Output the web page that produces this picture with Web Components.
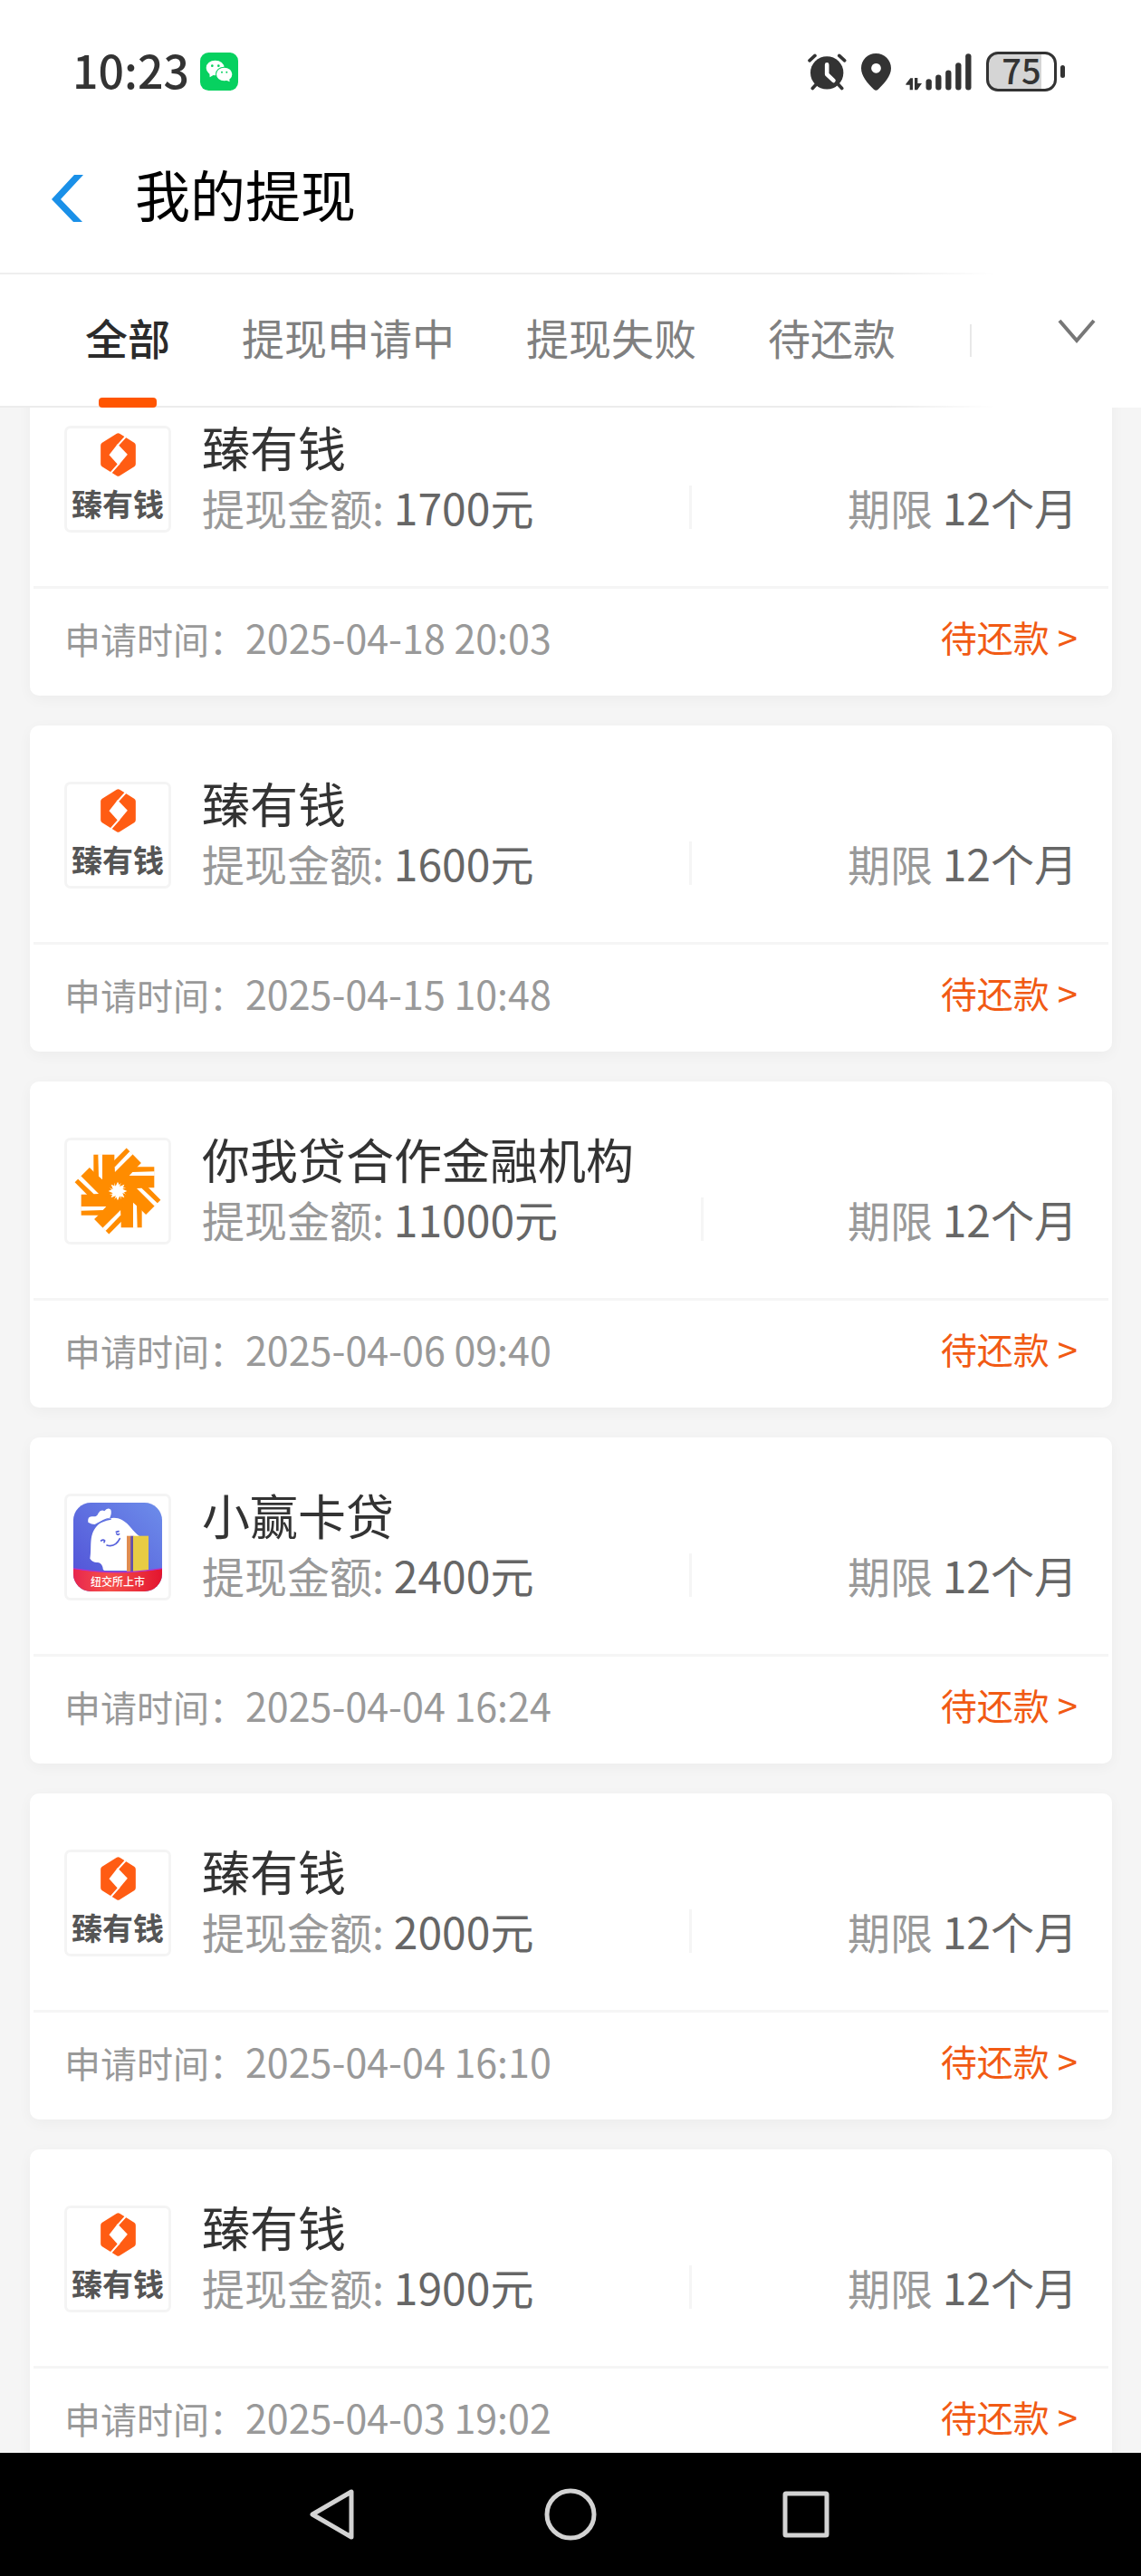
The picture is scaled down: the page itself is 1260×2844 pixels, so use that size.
<!DOCTYPE html>
<html lang="zh-CN">
<head>
<meta charset="UTF-8">
<meta name="viewport" content="width=device-width, initial-scale=1">
<title>我的提现</title>
<style>
  html, body {
    margin: 0;
    height: 100%;
  }

  body {
    display: flex;
    flex-direction: column;
    overflow: hidden;
    background: #fff;
    color: #333;
    font-family: "Noto Sans CJK SC", sans-serif;
  }
</style>
</head>
<body>
  <status-bar time="10:23" battery="75"></status-bar>
  <title-bar>我的提现</title-bar>
  <filter-tabs tabs="全部,提现申请中,提现失败,待还款"></filter-tabs>
  <record-list>
    <record-card name="臻有钱" logo="zhen" amount="1700元" term="12个月" time="2025-04-18 20:03">待还款 &gt;</record-card>
    <record-card name="臻有钱" logo="zhen" amount="1600元" term="12个月" time="2025-04-15 10:48">待还款 &gt;</record-card>
    <record-card name="你我贷合作金融机构" logo="niwo" amount="11000元" term="12个月" time="2025-04-06 09:40">待还款 &gt;</record-card>
    <record-card name="小赢卡贷" logo="xiaoying" amount="2400元" term="12个月" time="2025-04-04 16:24">待还款 &gt;</record-card>
    <record-card name="臻有钱" logo="zhen" amount="2000元" term="12个月" time="2025-04-04 16:10">待还款 &gt;</record-card>
    <record-card name="臻有钱" logo="zhen" amount="1900元" term="12个月" time="2025-04-03 19:02">待还款 &gt;</record-card>
  </record-list>
  <system-nav></system-nav>

<script>
/**
 * Phone status bar: clock, app badge, signal and battery
 */
class StatusBar extends HTMLElement {
  constructor() {
    super();
    this.attachShadow({ mode: 'open' });
  }

  connectedCallback() {
    this.shadowRoot.innerHTML = `
      <style>
        :host {
          flex: none;
          display: flex;
          align-items: center;
          justify-content: space-between;
          box-sizing: border-box;
          height: 136px;
          padding: 22px 84px 0 80px;
          color: #333;
        }

        .group {
          display: flex;
          align-items: center;
        }

        .left { gap: 12px; }
        .right { gap: 16px; }

        .time {
          font-size: 50px;
          font-weight: 500;
          line-height: 58px;
          padding-bottom: 6px;
        }

        svg { display: block; }

        .battery {
          display: flex;
          align-items: center;
          gap: 4px;
        }

        .cell {
          display: flex;
          align-items: center;
          justify-content: center;
          box-sizing: border-box;
          width: 78px;
          height: 44px;
          padding-bottom: 4px;
          border: 3px solid #333;
          border-radius: 13px;
          background: linear-gradient(90deg, #d5d5d5 80%, #fff 80%);
          font-size: 38px;
          font-weight: 500;
          line-height: 36px;
        }

        .nub {
          width: 5px;
          height: 14px;
          border-radius: 3px;
          background: #333;
        }
      </style>
      <div class="group left">
        <span class="time">${this.getAttribute('time')}</span>
        <svg width="42" height="42" viewBox="663 84 126 126" aria-hidden="true">
          <rect x="663" y="84" width="126" height="126" rx="28" fill="#07d160"/>
          <ellipse cx="713" cy="135" rx="30" ry="25" fill="#fff"/>
          <path d="M694 150 L695 166 L712 156Z" fill="#fff"/>
          <ellipse cx="743" cy="156" rx="29" ry="25" fill="#07d160"/>
          <ellipse cx="743" cy="156" rx="26" ry="22" fill="#fff"/>
          <path d="M745 174 L761 181 L759 168Z" fill="#fff"/>
          <g fill="#07d160">
            <circle cx="703" cy="128" r="4"/><circle cx="724" cy="128" r="4"/>
            <circle cx="735" cy="149" r="3"/><circle cx="751" cy="149" r="3"/>
          </g>
        </svg>
      </div>
      <div class="group right">
        <svg width="43" height="41" viewBox="156 83 130 123" fill="none" stroke-linecap="round" stroke-linejoin="round" aria-hidden="true">
          <circle cx="220" cy="147" r="55" fill="#333"/>
          <g stroke="#333" stroke-width="11">
            <path d="M162 106 L180 90"/><path d="M261 90 L279 106"/>
            <path d="M186 184 L172 199"/><path d="M256 184 L270 199"/>
          </g>
          <path d="M220 120 V152 L242 173" stroke="#fff" stroke-width="14"/>
        </svg>
        <svg width="33" height="41" viewBox="333 83 99 123" aria-hidden="true">
          <path fill="#333" fill-rule="evenodd" d="M382 83 C410 83 432 105 432 132 C432 158 411 181 389 202 Q382 208 375 202 C353 181 333 158 333 132 C333 105 354 83 382 83Z M382 116 a16 16 0 1 0 1 0Z"/>
        </svg>
        <svg width="73" height="41" viewBox="480 83 219 123" stroke="#333" stroke-width="19" stroke-linecap="round" aria-hidden="true">
          <path d="M557 177 V195"/><path d="M589 163 V195"/><path d="M622 148 V195"/><path d="M655 123 V195"/><path d="M688 93 V195"/>
          <path stroke="none" fill="#333" d="M481 184 L496 165 H504 V204 H494 V187 H481Z M510 164 H520 V182 H534 L519 204 H510Z"/>
        </svg>
        <div class="battery">
          <span class="cell">${this.getAttribute('battery')}</span>
          <span class="nub"></span>
        </div>
      </div>
    `;
  }
}

/**
 * Page title with the back button
 */
class TitleBar extends HTMLElement {
  constructor() {
    super();
    this.attachShadow({ mode: 'open' });
    this.shadowRoot.innerHTML = `
      <style>
        :host {
          flex: none;
          display: flex;
          align-items: center;
          gap: 56px;
          height: 165px;
          padding: 0 57px;
        }

        button {
          padding: 0;
          border: none;
          background: none;
        }

        svg { display: block; }

        h1 {
          margin: 0;
          padding-bottom: 10px;
          color: #000;
          font-size: 61px;
          font-weight: 400;
          line-height: 72px;
        }
      </style>
      <button type="button" aria-label="返回">
        <svg width="36" height="52" viewBox="0 0 36 52"><path d="M25 0 H35 L10 27 L34 52 H24 L0 27Z" fill="#1a90e8"/></svg>
      </button>
      <h1><slot></slot></h1>
    `;
  }
}

class FilterTabs extends HTMLElement {
  constructor() {
    super();
    this.attachShadow({ mode: 'open' });
  }

  connectedCallback() {
    const tabs = this.getAttribute('tabs').split(',');

    this.shadowRoot.innerHTML = `
      <style>
        :host {
          flex: none;
          position: relative;
          z-index: 1;
          display: flex;
          align-items: center;
          justify-content: space-between;
          height: 145px;
          padding: 0 50px 0 94px;
          border-top: 2px solid #eee;
          border-bottom: 2px solid #ececec;
          background: #fff;
        }

        .tabs {
          display: flex;
          align-items: stretch;
          gap: 79px;
          height: 100%;
        }

        button {
          position: relative;
          padding: 0;
          border: none;
          background: none;
          color: #808080;
          font: inherit;
        }

        .tab {
          padding-bottom: 8px;
          font-size: 47px;
          white-space: nowrap;
        }

        .tab[aria-selected="true"] {
          color: #2b2b2b;
          font-weight: 500;
        }

        .tab[aria-selected="true"]::after {
          content: "";
          position: absolute;
          left: calc(50% - 32px);
          bottom: -2px;
          width: 64px;
          height: 11px;
          border-radius: 4px;
          background: #f50;
        }

        /* edge of the next filter, hidden behind the fade */
        .next {
          align-self: center;
          width: 2px;
          height: 36px;
          margin-left: 3px;
          background: #999;
        }

        .fade {
          position: absolute;
          top: -2px;
          right: 0;
          bottom: -2px;
          width: 280px;
          background: linear-gradient(90deg, rgba(255, 255, 255, 0), #fff 42%);
        }

        svg { display: block; }

        .more { padding-bottom: 20px; }
      </style>
      <div class="tabs" role="tablist">
        ${tabs.map((tab, i) => `<button type="button" class="tab" role="tab" aria-selected="${i === 0}">${tab}</button>`).join('')}
        <span class="next"></span>
      </div>
      <div class="fade"></div>
      <button type="button" class="more" aria-label="展开">
        <svg width="42" height="28" viewBox="0 0 42 28" fill="none" stroke="#777" stroke-width="4"><path d="M2 2 L21 24 L40 2"/></svg>
      </button>
    `;

    this.shadowRoot.querySelectorAll('.tab').forEach(tab => {
      tab.addEventListener('click', () => this.select(tab));
    });
  }

  select(active) {
    this.shadowRoot.querySelectorAll('.tab').forEach(tab => {
      tab.setAttribute('aria-selected', tab === active);
    });
  }
}

/**
 * Lender logo in a framed square: zhen, niwo or xiaoying
 */
class LenderLogo extends HTMLElement {
  constructor() {
    super();
    this.attachShadow({ mode: 'open' });
  }

  connectedCallback() {
    this.shadowRoot.innerHTML = `
      <style>
        :host {
          flex: none;
          display: flex;
          flex-direction: column;
          align-items: center;
          justify-content: center;
          box-sizing: border-box;
          width: 118px;
          height: 118px;
          border: 3px solid #f4f4f4;
          border-radius: 7px;
          background: #fff;
        }

        svg { display: block; }

        .word {
          margin-top: 6px;
          color: #555;
          font-size: 34px;
          font-weight: 700;
          line-height: 48px;
          white-space: nowrap;
        }
      </style>
      ${this[this.getAttribute('kind')]()}
    `;
  }

  zhen() {
    return `
      <svg width="39" height="48" viewBox="182 66 116 144" aria-hidden="true">
        <path d="M235 68 Q240 65 245 68 L293 98 Q298 101 298 107 V169 Q298 175 293 178 L245 208 Q240 211 235 208 L187 178 Q182 175 182 169 V107 Q182 101 187 98Z" fill="#ff5c13"/>
        <path d="M265 78 L236 110 M244 166 L215 199" stroke="#fff" stroke-width="6"/>
        <path d="M238 103 L271 137 L241 173 L210 139Z" fill="#fff"/>
      </svg>
      <span class="word">臻有钱</span>
    `;
  }

  niwo() {
    // one arm, turned eight times round the centre
    const turn = shape => [0, 45, 90, 135, 180, 225, 270, 315]
      .map(a => `<path transform="rotate(${a} 238 228)" d="${shape}"/>`).join('');

    return `
      <svg width="112" height="112" viewBox="70 60 336 336" aria-hidden="true">
        <g fill="#ff8c00">${turn('M158 107 H227 V216 L238 228 L198 212 L158 170Z')}</g>
        <g fill="#fff">${turn('M173 106 H187 V190 L175 179Z')}</g>
        <path d="M238 197 L245 212 L260 206 L254 221 L269 228 L254 235 L260 250 L245 244 L238 259 L231 244 L216 250 L222 235 L207 228 L222 221 L216 206 L231 212Z" fill="#fff"/>
      </svg>
    `;
  }

  xiaoying() {
    return `
      <svg width="98" height="98" viewBox="93 87 294 294" aria-hidden="true">
        <defs>
          <linearGradient id="sky" x1="1" y1="0" x2="0" y2="1">
            <stop offset="0" stop-color="#6d8dea"/>
            <stop offset="1" stop-color="#504fd6"/>
          </linearGradient>
          <linearGradient id="ribbon" x1="0" y1="0" x2="1" y2="0">
            <stop offset="0" stop-color="#e8264e"/>
            <stop offset="0.4" stop-color="#f5504a"/>
            <stop offset="1" stop-color="#e3142f"/>
          </linearGradient>
          <clipPath id="tile"><rect x="93" y="87" width="294" height="294" rx="58"/></clipPath>
        </defs>
        <g clip-path="url(#tile)">
          <rect x="93" y="87" width="294" height="294" fill="url(#sky)"/>
          <path d="M148 272 C155 240 143 198 168 168 C190 142 225 128 254 144 C280 158 290 184 312 198 L270 200 V312 H196 Q190 310 190 300 Q185 285 172 285 Q158 286 148 272Z" fill="#fff"/>
          <path d="M142 152 Q139 130 158 133 Q172 134 175 123 Q184 108 196 115 Q206 101 217 110 Q221 120 214 137 Q190 140 172 158 Q158 162 142 152Z" fill="#fff"/>
          <path d="M160 164 Q188 146 218 141" fill="none" stroke="#5e70e0" stroke-width="5"/>
          <g fill="none" stroke="#5660dc" stroke-width="5" stroke-linecap="round">
            <path d="M204 228 Q232 236 247 206"/><path d="M185 213 Q192 208 197 213 L195 218"/><path d="M235 184 L243 182 M236 190 Q240 195 245 191"/>
          </g>
          <rect x="270" y="197" width="14" height="120" fill="#e08c50"/>
          <rect x="283" y="197" width="9" height="120" fill="#6450a8"/>
          <rect x="291" y="197" width="51" height="120" fill="#e8cc44"/>
          <path d="M93 305 Q240 330 387 305 V381 H93Z" fill="url(#ribbon)"/>
          <path d="M93 305 Q240 330 387 305" fill="none" stroke="#b32fd0" stroke-width="4"/>
        </g>
        <text x="240" y="364" text-anchor="middle" font-size="36" font-weight="500" fill="#fff">纽交所上市</text>
      </svg>
    `;
  }
}

/**
 * One withdrawal record
 */
class RecordCard extends HTMLElement {
  constructor() {
    super();
    this.attachShadow({ mode: 'open' });
  }

  connectedCallback() {
    this.shadowRoot.innerHTML = `
      <style>
        :host {
          flex: none;
          display: block;
          border-radius: 10px;
          background: #fff;
          box-shadow: 0 4px 16px rgba(0, 0, 0, 0.04);
        }

        .main {
          display: flex;
          align-items: center;
          gap: 34px;
          box-sizing: border-box;
          height: 239px;
          padding: 2px 38px 0 38px;
        }

        .info {
          flex: 1;
          min-width: 0;
          padding-bottom: 4px;
        }

        h2 {
          margin: 0;
          color: #333;
          font-size: 53px;
          font-weight: 400;
          line-height: 66px;
        }

        .detail {
          display: flex;
          align-items: center;
          justify-content: space-between;
          color: #666;
          font-size: 48px;
          line-height: 66px;
        }

        .label {
          color: #999;
          font-size: 47px;
        }

        .line {
          width: 3px;
          height: 48px;
          background: #f5f5f5;
        }

        .foot {
          display: flex;
          align-items: center;
          justify-content: space-between;
          box-sizing: border-box;
          height: 118px;
          padding: 0 38px 12px 38px;
          color: #999;
          font-size: 40px;
        }

        hr {
          height: 3px;
          margin: 0 4px;
          border: none;
          background: #f5f5f5;
        }

        .applied {
          display: flex;
          align-items: baseline;
        }

        time { font-size: 43px; }

        a {
          color: #f15a14;
          font-size: 40px;
          text-decoration: none;
        }
      </style>
      <div class="main">
        <lender-logo kind="${this.getAttribute('logo')}"></lender-logo>
        <div class="info">
          <h2>${this.getAttribute('name')}</h2>
          <div class="detail">
            <span><span class="label">提现金额:</span> ${this.getAttribute('amount')}</span>
            <span class="line"></span>
            <span><span class="label">期限</span> ${this.getAttribute('term')}</span>
          </div>
        </div>
      </div>
      <hr>
      <div class="foot">
        <span class="applied">申请时间：<time>${this.getAttribute('time')}</time></span>
        <a href="#"><slot></slot></a>
      </div>
    `;
  }
}

/**
 * Scroll area that holds the records
 */
class RecordList extends HTMLElement {
  constructor() {
    super();
    this.attachShadow({ mode: 'open' });
    this.shadowRoot.innerHTML = `
      <style>
        :host {
          flex: 1;
          min-height: 0;
          display: flex;
          flex-direction: column;
          gap: 33px;
          padding: 33px 32px 33px 33px;
          overflow-y: auto;
          scrollbar-width: none;
          background: #f5f5f5;
        }
      </style>
      <slot></slot>
    `;
  }
}

/**
 * Back, home and recent buttons of the system
 */
class SystemNav extends HTMLElement {
  constructor() {
    super();
    this.attachShadow({ mode: 'open' });
    this.shadowRoot.innerHTML = `
      <style>
        :host {
          flex: none;
          display: flex;
          align-items: center;
          justify-content: center;
          gap: 201px;
          height: 136px;
          background: #000;
        }

        button {
          padding: 0;
          border: none;
          background: none;
        }

        svg {
          display: block;
          fill: none;
          stroke: #d3d3d3;
          stroke-width: 5;
          stroke-linejoin: round;
        }
      </style>
      <button type="button" aria-label="返回"><svg width="60" height="60" viewBox="0 0 60 60"><path d="M6 30 L49 5 V55Z"/></svg></button>
      <button type="button" aria-label="主页"><svg width="60" height="60" viewBox="0 0 60 60"><circle cx="30" cy="30" r="26"/></svg></button>
      <button type="button" aria-label="最近"><svg width="60" height="60" viewBox="0 0 60 60"><rect x="6" y="7" width="46" height="46" rx="1"/></svg></button>
    `;
  }
}

customElements.define('status-bar', StatusBar);
customElements.define('title-bar', TitleBar);
customElements.define('filter-tabs', FilterTabs);
customElements.define('lender-logo', LenderLogo);
customElements.define('record-card', RecordCard);
customElements.define('record-list', RecordList);
customElements.define('system-nav', SystemNav);

// Start a little way down the list
document.querySelector('record-list').scrollTop = 75;
</script>
</body>
</html>
